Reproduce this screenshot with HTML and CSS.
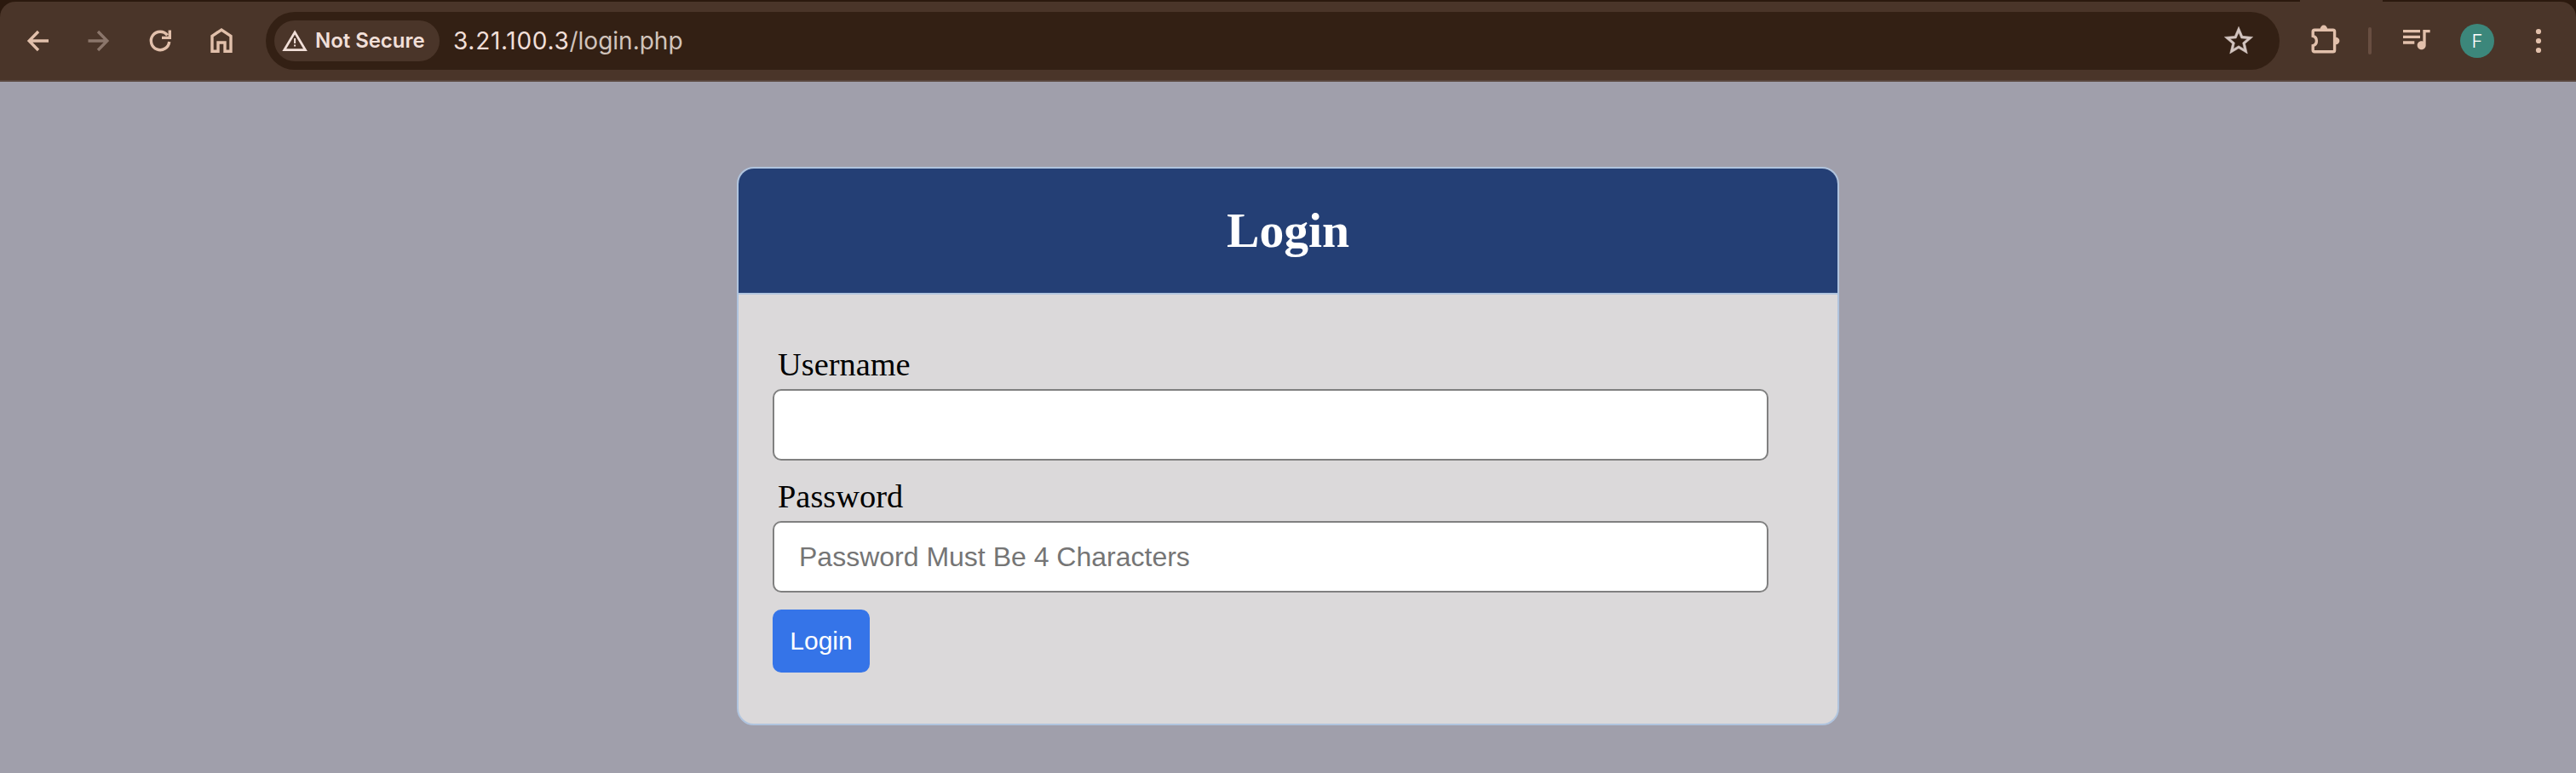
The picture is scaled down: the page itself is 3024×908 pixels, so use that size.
FILE: index.html
```html
<!DOCTYPE html>
<html lang="en">
<head>
<meta charset="utf-8">
<title>Login</title>
<link rel="stylesheet" href="styles.css">
</head>
<body>
<header class="browser">
  <div class="tab-strip"><span class="active-tab"></span></div>
  <div class="toolbar">
    <nav class="nav">
      <svg class="icon" viewBox="0 0 40 40"><path d="M33 20H10.5M21 9L10.2 20L21 31"/></svg>
      <svg class="icon icon-off" viewBox="0 0 40 40"><path d="M7.5 20H30M19 9L29.8 20L19 31"/></svg>
      <svg class="icon" viewBox="0 0 40 40"><path d="M30.7 21A10.7 10.7 0 1 1 28.5 13.4M22 16.4H33M31.3 7.5V18"/></svg>
      <svg class="icon" viewBox="0 0 40 40"><path d="M9 32.3V14.3L20 7L31 14.3V32.3H24V22H16V32.3Z"/></svg>
    </nav>
    <div class="omnibox">
      <div class="chip">
        <svg class="warn" viewBox="0 0 32 28"><path d="M16.1 3.9L28.4 24.6H3.8Z" fill="none" stroke="currentColor" stroke-width="2.8"/><path d="M15.1 11h2v6h-2zM15.1 18.6h2v2h-2z" fill="currentColor"/></svg>
        <span class="chip-text">Not Secure</span>
      </div>
      <div class="url"><span class="host">3.21.100.3</span><span class="path">/login.php</span></div>
      <svg class="star" viewBox="0 0 24 24"><path d="M22 9.24l-7.19-.62L12 2 9.19 8.63 2 9.24l5.46 4.73L5.82 21 12 17.27 18.18 21l-1.63-7.03L22 9.24zM12 15.4l-3.76 2.27 1-4.28-3.32-2.88 4.38-.38L12 6.1l1.71 4.04 4.38.38-3.32 2.88 1 4.28L12 15.4z"/></svg>
    </div>
    <svg class="icon extensions" viewBox="0 0 40 40"><path d="M7 7.2H28.8Q30.6 7.2 30.6 9V31Q30.6 32.8 28.8 32.8H7Q5.2 32.8 5.2 31V25.6Q9.4 24.4 9.4 20T5.2 14.4V9Q5.2 7.2 7 7.2Z"/><path class="solid" d="M13.7 6a4.2 4.4 0 0 1 8.4 0zM32 15.8a4.4 4.2 0 0 1 0 8.4z"/></svg>
    <span class="divider"></span>
    <svg class="icon media" viewBox="0 1.8 24 24"><path class="solid" d="M15 6H3v2h12V6zm0 4H3v2h12v-2zM3 16h8v-2H3v2zM17 6v8.18c-.31-.11-.65-.18-1-.18-1.66 0-3 1.34-3 3s1.34 3 3 3 3-1.34 3-3V8h3V6h-5z"/></svg>
    <span class="avatar">F</span>
    <svg class="icon menu" viewBox="0 0 40 40"><g class="solid"><circle cx="20" cy="9" r="3.1"/><circle cx="20" cy="20" r="3.1"/><circle cx="20" cy="31" r="3.1"/></g></svg>
  </div>
</header>
<main class="page">
  <section class="card">
    <h1 class="card-title">Login</h1>
    <form class="form">
      <label class="label" for="username">Username</label>
      <input class="field" id="username" type="text">
      <label class="label" for="password">Password</label>
      <input class="field" id="password" type="password" placeholder="Password Must Be 4 Characters">
      <button class="submit" type="button">Login</button>
    </form>
  </section>
</main>
</body>
</html>
```
FILE: styles.css
```css
* { box-sizing: border-box; }
body {
  margin: 0;
  height: 908px;
  overflow: hidden;
  background: #a09fab;
  font-family: "Liberation Serif", serif;
}
.browser { height: 96px; background: #2b190e; }
.tab-strip { height: 2px; display: flex; justify-content: flex-end; padding-right: 227px; }
.active-tab { width: 97px; background: #4a3529; }
.toolbar {
  height: 94px;
  display: flex;
  align-items: center;
  padding: 0 24px;
  background: #4a3529;
  border-bottom: 2px solid #59473e;
  border-radius: 18px 18px 0 0;
}
.nav { display: flex; gap: 32px; margin-right: 32px; }
.icon {
  display: block;
  width: 40px;
  height: 40px;
  flex: none;
  fill: none;
  stroke: #e2c0ab;
  stroke-width: 3.4;
}
.icon-off { stroke: #8b766b; }
.solid { fill: #e2c0ab; stroke: none; }
.omnibox {
  flex: 1;
  height: 68px;
  display: flex;
  align-items: center;
  padding: 0 28px 0 10px;
  border-radius: 34px;
  background: #332014;
}
.chip {
  width: 194px;
  height: 48px;
  display: flex;
  align-items: center;
  padding-left: 8px;
  border-radius: 24px;
  background: #4a3529;
  color: #f1dfd8;
}
.warn { width: 32px; height: 28px; }
.chip-text {
  margin-left: 8px;
  font: 600 24px/48px Inter, sans-serif;
  letter-spacing: -0.05px;
  white-space: nowrap;
}
.url {
  flex: 1;
  margin-left: 16px;
  font: 400 28px/48px Inter, sans-serif;
  white-space: nowrap;
}
.host { color: #f1dfd8; letter-spacing: 0.7px; }
.path { color: #d1c4bc; }
.star { width: 40px; height: 40px; fill: #d3c5c0; stroke: #d3c5c0; stroke-width: 0.3; }
.extensions { margin-left: 34px; }
.divider { width: 4px; height: 32px; margin: 0 32px 0 30px; border-radius: 2px; background: #684e41; }
.avatar {
  width: 40px;
  height: 40px;
  margin: 0 32px 0 32px;
  border-radius: 50%;
  background: #3c877b;
  color: #fff;
  font: 300 22px/40px Inter, sans-serif;
  text-align: center;
}
.page { padding-top: 100px; }
.card {
  width: 1294px;
  height: 656px;
  margin: 0 auto;
  border: 2px solid #b0c4de;
  border-radius: 20px;
  background: #dbd9da;
  overflow: hidden;
}
.card-title {
  margin: 0;
  height: 148px;
  border-bottom: 2px solid #b0c4de;
  background: #243f75;
  color: #fff;
  font-size: 57.6px;
  line-height: 146px;
  text-align: center;
}
.form { display: flex; flex-direction: column; align-items: flex-start; padding: 60px 40px 0; }
.label { margin: 0 0 6px 6px; font-size: 38.4px; line-height: 45px; }
.field {
  width: 1169px;
  height: 84px;
  margin: 0 0 20px;
  padding: 0 28px 0 29px;
  border: 2px solid #808080;
  border-radius: 10px;
  background: #fff;
  font: 32px "Liberation Sans", sans-serif;
}
.field::placeholder { color: #757575; }
.submit {
  width: 114px;
  height: 74px;
  padding: 0;
  border: 0;
  border-radius: 10px;
  background: #3574e8;
  color: #fff;
  font: 30px "Liberation Sans", sans-serif;
}
```
